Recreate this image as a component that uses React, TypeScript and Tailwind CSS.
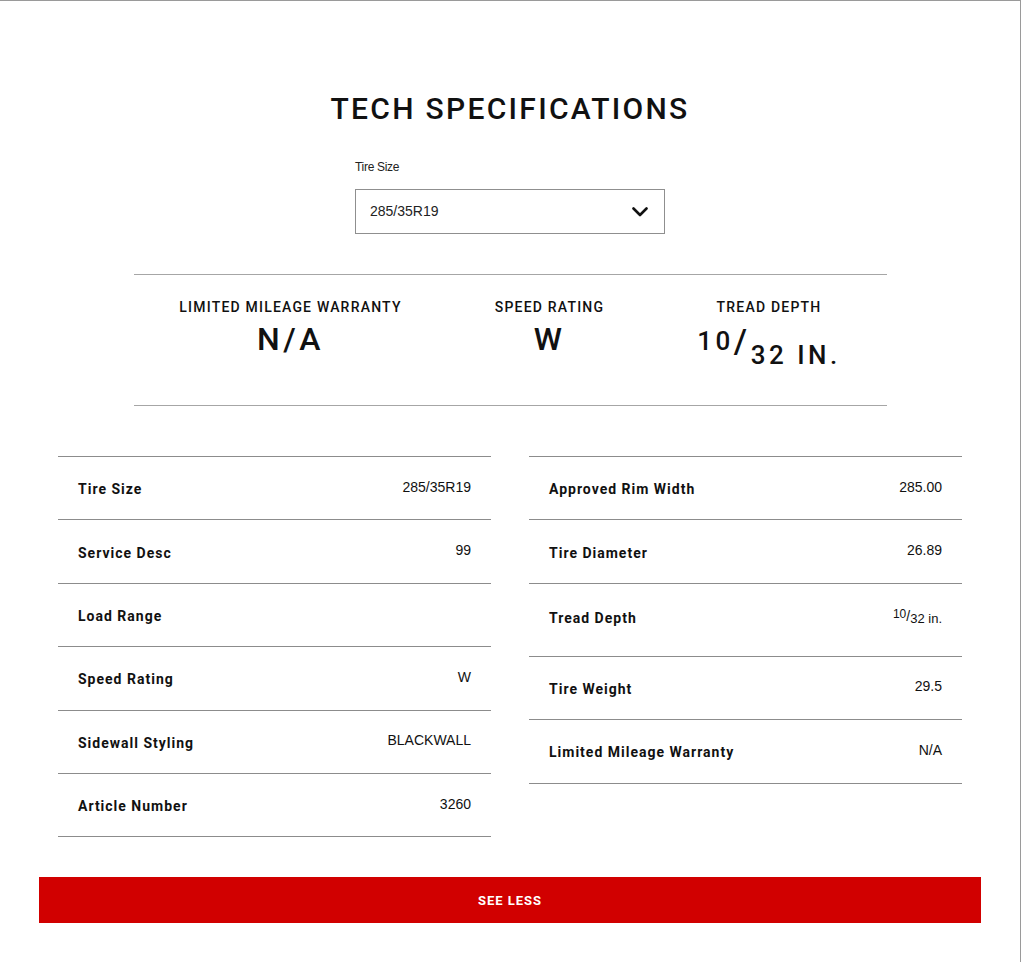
import React from 'react'

type Spec = { label: string; value: React.ReactNode; tall?: boolean }

const din = { fontFamily: 'Roboto, "DejaVu Sans", sans-serif' }
const arial = { fontFamily: '"Liberation Sans", Arial, sans-serif' }

const leftSpecs: Spec[] = [
  { label: 'Tire Size', value: '285/35R19' },
  { label: 'Service Desc', value: '99' },
  { label: 'Load Range', value: '' },
  { label: 'Speed Rating', value: 'W' },
  { label: 'Sidewall Styling', value: 'BLACKWALL' },
  { label: 'Article Number', value: '3260' },
]

const rightSpecs: Spec[] = [
  { label: 'Approved Rim Width', value: '285.00' },
  { label: 'Tire Diameter', value: '26.89' },
  {
    label: 'Tread Depth',
    tall: true,
    value: (
      <span className="whitespace-nowrap relative -top-[2px]">
        <sup className="text-[12px] relative -top-[3px]">10</sup>/
        <sub className="text-[13px] relative top-[2px]">32 in.</sub>
      </span>
    ),
  },
  { label: 'Tire Weight', value: '29.5' },
  { label: 'Limited Mileage Warranty', value: 'N/A' },
]

function SpecTable({ specs }: { specs: Spec[] }) {
  return (
    <div className="border-t border-[#8c8c8c]">
      {specs.map((s) => (
        <div
          key={s.label}
          className={`flex items-center justify-between px-5 border-b border-[#8c8c8c] ${s.tall ? 'h-[73px]' : 'h-[63.4px]'}`}
        >
          <span
            style={din}
            className={`text-[14px] font-bold tracking-[1px] text-[#111] ${s.tall ? '-mt-[3px]' : 'pt-[3px]'}`}
          >
            {s.label}
          </span>
          <span style={arial} className="text-[14px] text-[#111] -mt-[2px]">
            {s.value}
          </span>
        </div>
      ))}
    </div>
  )
}

function Highlight({ label, children }: { label: string; children: React.ReactNode }) {
  return (
    <div className="flex flex-col items-center">
      <span style={din} className="text-[14px] leading-[18px] font-medium tracking-[1.2px] text-[#111]">
        {label}
      </span>
      <span style={din} className="text-[32px] leading-[40px] font-medium tracking-[3.5px] text-[#111] mt-[3px]">
        {children}
      </span>
    </div>
  )
}

export default function App() {
  return (
    <div className="w-[1021px] h-[962px] bg-white border-t border-r border-[#9a9a9a] overflow-hidden">
      <div className="flex flex-col items-center pt-[88px]">
        <h1 style={din} className="text-[30px] leading-[40px] font-medium tracking-[2.3px] text-[#111]">
          TECH SPECIFICATIONS
        </h1>

        <div className="mt-[30px] w-[310px]">
          <label style={arial} className="block text-[12px] leading-[16px] tracking-[-0.3px] text-[#222]">
            Tire Size
          </label>
          <div className="mt-[14px] h-[45px] border border-[#8f8f8f] flex items-center justify-between pl-[14px] pr-[16px]">
            <span style={arial} className="text-[14px] text-[#222]">285/35R19</span>
            <svg width="16" height="10" viewBox="0 0 16 10" fill="none">
              <path d="M1.5 1.5 L8 8 L14.5 1.5" stroke="#111" strokeWidth="2.6" strokeLinecap="round" strokeLinejoin="round" />
            </svg>
          </div>
        </div>

        <div className="mt-[40px] w-[753px] h-[132px] border-t border-b border-[#a6a6a6] grid grid-cols-[314px_204px_235px] pt-[23px]">
          <Highlight label="LIMITED MILEAGE WARRANTY">N/A</Highlight>
          <Highlight label="SPEED RATING">W</Highlight>
          <Highlight label="TREAD DEPTH">
            <span className="whitespace-nowrap">
              <sup className="text-[26px] relative -top-[1px]">10</sup>
              <span className="text-[34px] relative top-[2px]">/</span>
              <sub className="text-[26px] relative top-[13px]">32 IN.</sub>
            </span>
          </Highlight>
        </div>

        <div className="mt-[50px] w-[904px] grid grid-cols-2 gap-[38px] items-start">
          <SpecTable specs={leftSpecs} />
          <SpecTable specs={rightSpecs} />
        </div>

        <button
          style={din}
          className="mt-[40px] w-[942px] h-[46px] bg-[#d10000] text-white text-[13px] font-bold tracking-[1px]"
        >
          SEE LESS
        </button>
      </div>
    </div>
  )
}
